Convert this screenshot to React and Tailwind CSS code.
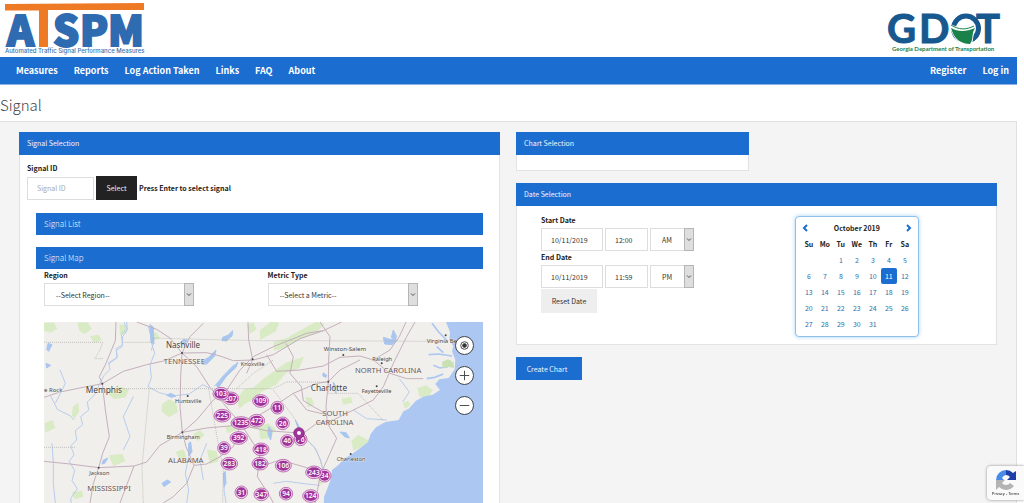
import { useState } from "react";

const NAV_LEFT = ["Measures", "Reports", "Log Action Taken", "Links", "FAQ", "About"];
const NAV_RIGHT = ["Register", "Log in"];
const DAYS = ["Su", "Mo", "Tu", "We", "Th", "Fr", "Sa"];
const WEEKS = [
  [null, null, 1, 2, 3, 4, 5],
  [6, 7, 8, 9, 10, 11, 12],
  [13, 14, 15, 16, 17, 18, 19],
  [20, 21, 22, 23, 24, 25, 26],
  [27, 28, 29, 30, 31, null, null],
];

// map units: 3 per pixel
const PINS = [
  [572, 265, "207", 24],
  [543, 251, "103", 24],
  [662, 273, "109", 24],
  [712, 293, "11", 19],
  [547, 317, "225", 25],
  [650, 332, "472", 24],
  [603, 339, "1235", 30],
  [728, 340, "26", 20],
  [596, 384, "392", 26],
  [782, 388, "76", 19],
  [742, 393, "46", 20],
  [552, 414, "39", 19],
  [663, 418, "418", 24],
  [568, 461, "283", 25],
  [660, 461, "182", 24],
  [730, 467, "106", 24],
  [854, 497, "34", 19],
  [822, 487, "243", 25],
  [604, 547, "31", 19],
  [664, 553, "347", 22],
  [738, 551, "94", 20],
  [812, 558, "124", 24],
];

const CITIES = [
  [378, 114, "Nashville", 24],
  [137, 250, "Memphis", 25],
  [812, 243, "Charlotte", 25],
  [602, 168, "Knoxville", 17],
  [851, 123, "Winston-Salem", 18],
  [997, 152, "Raleigh", 17],
  [965, 249, "Fayetteville", 17],
  [405, 279, "Huntsville", 17],
  [380, 388, "Birmingham", 17],
  [148, 494, "Jackson", 17],
  [890, 452, "Charleston", 17],
  [1160, 98, "Virginia Be", 18],
  [12, 246, "e Rock", 18],
];

const STATES = [
  [371, 163, "TENNESSEE"],
  [945, 188, "NORTH CAROLINA"],
  [847, 318, "SOUTH"],
  [827, 344, "CAROLINA"],
  [384, 460, "ALABAMA"],
  [142, 544, "MISSISSIPPI"],
];

const DOTS = [[187, 221], [426, 129], [638, 148], [910, 135], [1025, 160], [1010, 229], [865, 215], [443, 258], [427, 367], [176, 473], [932, 432], [1217, 76]];

const GREENS = [
  "M12 38l30 0 10 18-20 12-20-6z",
  "M112 38l30-2 14 20-22 16-16-10z",
  "M150 78l26-4 10 16-24 10z",
  "M238 42l18 4 4 22-20 8z",
  "M98 290l16-12 4 24-14 24-8-10z",
  "M205 238l36-8 26 8-10 24-34 6-16-12z",
  "M366 282l22-14 20 10 6 28-28 16-22-18z",
  "M330 76l20-10 10 18-22 10z",
  "M14 340l24-10 8 24-30 14z",
  "M206 436l42-4 8 22-36 14z",
  "M96 546l30-4 4 18-26 8z",
  "M406 426l24-8 10 22-22 8z",
  "M460 372l20-12 14 16-22 18z",
  "M500 418l30 6 6 30-26 8z",
  "M590 268l22-30 30-6 28-26 42-30 30-20 50-16-14 34-40 16-30 34-44 22-20 22-30 14-16 14z",
  "M660 60l34-26 24 4-10 26-48 26z",
  "M700 96l40-12 36-20 50-28 28 6-24 24-50 22-44 26-34 8z",
  "M620 46l20-10 10 22-20 14z",
  "M625 324l18-10 18 12-8 26-22 4z",
  "M555 350l26-6 10 16-28 10z",
  "M655 350l30-10 22 18-16 26-30 4z",
  "M905 266l28-6 4 18-28 6z",
  "M934 392l20-18 34 18-24 20-24 10z",
  "M1088 280l16-8 8 12-16 12z",
  "M1132 234l26-8 20 14-12 22-28-2z",
  "M796 260l20 4 6 20-18 8z",
  "M840 500l10 10-6 14-12-8z",
  "M548 90l12-16 10 10-10 14z",
];

const LAKES = [
  "M330 44l10 8 2 50-8-4-4-34z",
  "M492 150l14-8 22-22-4 18-24 24-12 2z",
  "M548 82l16-6 14-14-2 16-18 14-12 0z",
  "M528 226l20-24 24-26 22-20-6 16-30 28-22 32z",
  "M420 100l10-12 12 2-10 14z",
  "M380 256l12-6 16 8-14 4z",
  "M446 400l6-4 4 30-10 12z",
  "M550 490l6-6 2 36-6 10z",
  "M366 520l16-10 10 6-20 14z",
  "M728 338l6 10-4 8-8-8z",
  "M766 330l12 22 8 14-10-6z",
  "M686 350l10 12-4 28-8-18z",
  "M900 366l18 2 10 16-14-4z",
  "M1030 82l20 6 22 2-16 14-22-2z",
  "M1060 60l10 20-6 10-10-8z",
  "M880 216l8 14 0 20-8-16z",
  "M850 188l10 8-2 6-10-4z",
  "M190 450l14-6-10 16-8 2z",
  "M24 100l12 4-10 20-6-6z",
  "M18 160l14 6-12 8z",
];

const ROADS = [
  "M228 36L226 92 198 160 178 200 187 221 196 300 208 380 188 430 176 473 160 520 150 579",
  "M12 262L60 246 130 232 187 221 250 184 320 164 371 153 426 129 500 128 540 138 580 152 640 150 700 134 780 86 850 62 905 36",
  "M290 36L350 58 390 84 426 129 422 200 420 290 427 367 438 410 462 466 440 520 400 560 370 579",
  "M426 129L450 80 490 40",
  "M426 129L470 170 510 232 550 280 575 310 602 340 640 400 660 430 652 500 690 560 700 579",
  "M12 454L90 462 176 473 282 468 320 456 360 406 427 367 470 330 520 270 560 240 600 180 640 140 700 110 800 70 850 62",
  "M427 367L500 354 600 345 680 362 790 370 830 340 880 330 940 300 1000 270 1030 230 1060 160 1100 80 1125 36",
  "M462 466L500 462 540 440 580 410 602 340",
  "M282 468L262 520 240 579",
  "M624 36L626 90 638 148 620 190",
  "M680 134L710 184 780 180 850 168 900 142 960 138 1000 150 1050 120 1078 80 1098 36",
  "M602 340L650 320 700 290 760 250 830 220 865 215 900 180 960 150",
  "M840 36L870 80 866 150 865 215 858 290 862 340 890 385 870 430 852 470 840 500 825 579",
  "M738 100L760 140 750 190 784 230 790 272 820 290 870 318",
  "M660 470L720 450 790 470 840 486",
  "M1000 150L1050 190 1100 206 1150 206",
  "M760 250L800 300 850 312",
];

const RIVERS = [
  "M252 36l8 20-16 18 4 30-20 12 4 26-26 16 4 20-18 18-14 28-14 30-22 22 4 24-24 20 6 24-22 18 4 28-18 18 10 26-14 20 16 28-8 30 16 24-20 30 4 28-14 24",
  "M260 36l2 24-14 20-2 30-16 10 0 24-24 18",
  "M340 60l-8 30 12 40-14 34 4 40-10 26 34 18 40 10 50-6 40-28 20 10",
  "M325 50l15 50-6 22",
  "M32 258l20 40 40 20 10 12",
  "M36 400l4 60 0 60 6 59",
  "M446 440l-10 50 10 50-6 39",
  "M522 230l30-36 30-30",
  "M556 500l-4 40 6 39",
  "M500 400l-20 50 10 60",
  "M700 520l40-6 60 8 40 4",
  "M940 300l40 26 60 4",
  "M1078 206l30 40-20 30",
  "M792 380l30 30 20 40 8 40",
  "M60 180l16 40-30 60",
  "M280 260l-30 60 20 60-20 40",
];

const BORDERS = [
  "M12 97H188L180 120 164 146H190",
  "M250 97H334L340 84 480 88 660 92 H800L1170 94H1220",
  "M186 236H590L640 190 700 150",
  "M328 236L318 340 306 470 310 579",
  "M506 236L522 330 540 430 550 470 548 579",
  "M12 412H108",
  "M590 236H700L740 216H865V250H954L1030 332",
  "M700 240L760 320 800 390 830 420 850 480",
];

const COAST =
  "M1218 36L1230 66 1228 90 1240 108 1236 124 1246 150 1244 178 1226 204 1198 208 1186 222 1200 240 1178 254 1150 260 1128 272 1106 296 1090 304 1076 330 1036 336 1008 352 992 372 984 396 958 416 936 432 912 446 896 464 876 480 872 508 862 536 852 560 850 640H1500V36Z";

function AtspmLogo() {
  return (
    <svg className="h-[57px] w-[146px] overflow-visible" viewBox="0 0 146 57" role="img" aria-label="ATSPM">
      <g
        fill="#2f6bb0"
        stroke="#2f6bb0"
        strokeWidth="2"
        fontFamily="'Noto Sans CJK SC', Lato, sans-serif"
        fontWeight="900"
        fontSize="41"
      >
        <text x="7" y="46">A</text>
        <text x="53" y="46">S</text>
        <text x="80" y="46">P</text>
        <text x="108" y="46">M</text>
      </g>
      <path d="M5 4L144 3V10H48V47H39V10.500H5Z" fill="#ee7a25" />
      <text x="5" y="53" fill="#3c70ad" fontFamily="Inter, sans-serif" fontWeight="500" fontSize="6">
        Automated Traffic Signal Performance Measures
      </text>
    </svg>
  );
}

function GdotLogo() {
  return (
    <svg className="h-[44px] w-[114px] overflow-visible" viewBox="0 0 114 44" role="img" aria-label="GDOT">
      <g fill="#17588f" stroke="#17588f" fontFamily="Lato, sans-serif" fontWeight="700" fontSize="40">
        <text x="0" y="33">G</text>
        <text x="32" y="33">D</text>
        <text x="89" y="33">T</text>
      </g>
      <circle cx="79" cy="18.500" r="12.500" fill="none" stroke="#17588f" strokeWidth="5" />
      <path d="M62 13C70 18 79 19 88 17L85 35C74 36 66 31 62 13Z" fill="#fff" />
      <path d="M64 18C71 22 79 22 88 18C84 24 87 29 83 34C74 34 67 29 64 18Z" fill="#19814a" />
      <path d="M64 15C72 20 79 20 87 16" fill="none" stroke="#19814a" strokeWidth="1" />
      <text x="5" y="41" fill="#19814a" fontFamily="Lato, sans-serif" fontWeight="700" fontSize="6">
        Georgia Department of Transportation
      </text>
    </svg>
  );
}

function SignalMap() {
  return (
    <div className="relative">
      <svg
        className="block h-[181px] w-full"
        viewBox="12 36 1317 543"
        preserveAspectRatio="xMinYMin slice"
        fontFamily="'Noto Sans', sans-serif"
      >
        <rect x="12" y="36" width="1500" height="600" fill="#f1efec" />
        {GREENS.map((d) => <path key={d} d={d} fill="#d9ebc5" />)}
        {RIVERS.map((d) => <path key={d} d={d} fill="none" stroke="#b7cdec" strokeWidth="3" />)}
        {LAKES.map((d) => <path key={d} d={d} fill="#a9c6f0" stroke="#a9c6f0" strokeWidth="3" />)}
        {BORDERS.map((d) => (
          <path key={d} d={d} fill="none" stroke="#a9a7a5" strokeWidth="2" strokeDasharray="3 3" />
        ))}
        {ROADS.map((d) => (
          <path key={d} d={d} fill="none" stroke="#c4afbd" strokeWidth="3" strokeLinejoin="round" />
        ))}
        <path d={COAST} fill="#abc7f2" />
        <path
          d="M1176 40l20 26 24 24M1166 134l30-2 40 6M1160 206l24-4 26-10M1180 166l20 8 24-4M1190 110l20 18"
          fill="none"
          stroke="#abc7f2"
          strokeWidth="5"
        />
        <path d="M1206 156l18-8 12 6-4 16-24 4zM1224 170l16-16 2 20z" fill="#c9e0b4" />
        {DOTS.map(([x, y]) => <circle key={`${x}-${y}`} cx={x} cy={y} r="3" fill="#444" />)}
        <g fill="#444" stroke="#f6f4f2" strokeWidth="2" paintOrder="stroke">
          {CITIES.map(([x, y, name, size]) => (
            <text key={name} x={x} y={y} fontSize={size}>{name}</text>
          ))}
        </g>
        <g fill="#6a5552" fontSize="23" stroke="#f6f4f2" strokeWidth="2" paintOrder="stroke">
          {STATES.map(([x, y, name]) => <text key={name} x={x} y={y}>{name}</text>)}
        </g>
        {PINS.map(([x, y, label, rx]) => (
          <g key={`${x}-${y}`}>
            <ellipse cx={x} cy={y} rx={rx} ry="19" fill="#f0d6ec" stroke="#a33d98" strokeWidth="2" />
            <ellipse cx={x} cy={y} rx={rx - 4} ry="15" fill="#a0339a" />
            <text x={x} y={y + 7} textAnchor="middle" fontSize="20" fontWeight="600" fill="#fff">{label}</text>
          </g>
        ))}
        <path
          d="M777 390C772 384 761 379 761 369A16 16 0 0 1 793 369C793 379 782 384 777 390Z"
          fill="#a0339a"
          stroke="#7d1f77"
          strokeWidth="2"
        />
        <circle cx="777" cy="369" r="6" fill="#fff" />
      </svg>

      {/* Map controls */}
      <div className="absolute top-[14px] right-[9px] flex flex-col gap-[11px]">
        <MapButton label="Locate me">
          <circle cx="9" cy="9" r="4" />
          <circle cx="9" cy="9" r="2" fill="#333" />
        </MapButton>
        <MapButton label="Zoom in"><path d="M4 9h10M9 4v10" /></MapButton>
        <MapButton label="Zoom out"><path d="M4 9h10" /></MapButton>
      </div>
    </div>
  );
}

function MapButton({ label, children }) {
  return (
    <button aria-label={label} className="h-[19px] w-[19px] rounded-full border border-[#444] bg-white">
      <svg className="block h-full w-full" viewBox="0 0 18 18" fill="none" stroke="#444" strokeWidth="1">
        {children}
      </svg>
    </button>
  );
}

function Select({ id, label, options, className }) {
  return (
    <div className={`relative h-[23px] ${className}`}>
      <select
        id={id}
        aria-label={label}
        className="h-full w-full appearance-none border border-[#ddd] bg-white px-[11px] text-[7px] text-[#333]"
      >
        {options.map((o) => <option key={o}>{o}</option>)}
      </select>
      <span className="pointer-events-none absolute inset-y-0 right-0 flex w-[10px] items-center justify-center border border-[#b5b5b5] bg-[#dedede]">
        <svg className="h-1 w-1.5" viewBox="0 0 6 4" fill="none" stroke="#555">
          <path d="M1 .5l2 2 2-2" />
        </svg>
      </span>
    </div>
  );
}

function Panel({ title, className = "", children }) {
  return (
    <section className={`border border-[#e3e3e3] bg-white ${className}`}>
      <h2 className="-mx-px -mt-px flex h-[23px] items-center bg-[#1c6dd0] px-2 pb-px text-[#f0f6fd]">{title}</h2>
      {children}
    </section>
  );
}

const INPUT = "h-[23px] border border-[#ddd] bg-white px-[9px] text-[#333] placeholder:text-[#aaa]";
const LABEL = "block h-[14px] leading-[12px] font-bold";

function DateRow({ id, label, time, period }) {
  const [date, setDate] = useState("10/11/2019");
  return (
    <div>
      <label htmlFor={id} className={LABEL}>{label}</label>
      <div className="flex gap-0.5">
        <input id={id} value={date} onChange={(e) => setDate(e.target.value)} className={`w-[62px] ${INPUT}`} />
        <input aria-label={`${label} time`} defaultValue={time} className={`w-[43px] ${INPUT}`} />
        <Select
          label={`${label} AM/PM`}
          options={period === "AM" ? ["AM", "PM"] : ["PM", "AM"]}
          className="w-[44px]"
        />
      </div>
    </div>
  );
}

function Calendar() {
  const [selected, setSelected] = useState(11);
  return (
    <div className="mt-0.5 h-[121px] w-[124px] rounded-sm border border-[#8ec0ea] bg-white px-[5px] pt-[3px] shadow-[0_0_4px_#a9d3f5]">
      <div className="flex h-4 items-center justify-between">
        <button aria-label="Previous month" className="text-[#1c6dd0]">
          <svg className="h-2 w-2" viewBox="0 0 8 8" fill="none" stroke="currentColor" strokeWidth="2">
            <path d="M6 1L3 4l3 3" />
          </svg>
        </button>
        <span className="font-bold">October 2019</span>
        <button aria-label="Next month" className="text-[#1c6dd0]">
          <svg className="h-2 w-2" viewBox="0 0 8 8" fill="none" stroke="currentColor" strokeWidth="2">
            <path d="M2 1l3 3-3 3" />
          </svg>
        </button>
      </div>
      <table className="w-full table-fixed border-collapse text-center">
        <thead>
          <tr className="h-4">
            {DAYS.map((d) => <th key={d} className="p-0 font-bold">{d}</th>)}
          </tr>
        </thead>
        <tbody>
          {WEEKS.map((week, i) => (
            <tr key={i} className="h-4">
              {week.map((day, j) => (
                <td key={j} className="p-0">
                  {day && (
                    <button
                      onClick={() => setSelected(day)}
                      className={`block h-4 w-full rounded-xs leading-4 ${
                        day === selected ? "bg-[#1c6dd0] text-white" : "text-[#2f6fab]"
                      }`}
                    >
                      {day}
                    </button>
                  )}
                </td>
              ))}
            </tr>
          ))}
        </tbody>
      </table>
    </div>
  );
}

export default function App() {
  return (
    <div className="flex h-screen flex-col overflow-hidden bg-white pr-[7px] font-['Noto_Sans_CJK_SC','Noto_Sans',sans-serif] text-[7px] leading-[10px] text-[#222]">
      {/* Logos */}
      <header className="flex h-[57px] shrink-0 items-start justify-between pr-4">
        <AtspmLogo />
        <div className="pt-[10px]"><GdotLogo /></div>
      </header>

      {/* Navigation */}
      <nav className="flex h-[28px] shrink-0 items-center justify-between border-b border-[#8ab2e5] bg-[#1c6dd0] pr-2 pl-4 text-[9px] font-bold text-white">
        <div className="flex gap-4">
          {NAV_LEFT.map((item) => <a key={item} href="#">{item}</a>)}
        </div>
        <div className="flex gap-4">
          {NAV_RIGHT.map((item) => <a key={item} href="#">{item}</a>)}
        </div>
      </nav>

      <h1 className="flex h-9 shrink-0 items-center pt-1 text-[15px] font-light text-[#444]">Signal</h1>

      <main className="grid flex-1 grid-cols-2 items-start gap-4 border-t border-r border-[#e0e0e0] bg-[#f4f4f4] px-[19px] pt-[10px]">
        {/* Signal selection */}
        <Panel title="Signal Selection">
          <div className="px-[7px] pt-[7px]">
            <label htmlFor="signal-id" className={LABEL}>Signal ID</label>
            <div className="flex items-center gap-0.5">
              <input id="signal-id" placeholder="Signal ID" className={`w-[67px] ${INPUT}`} />
              <button className="h-6 w-[41px] bg-[#222] text-[#eee]">Select</button>
              <span className="font-bold">Press Enter to select signal</span>
            </div>
          </div>

          <div className="px-4 pt-[13px]">
            <h3 className="flex h-[22px] items-center bg-[#1c6dd0] px-2 pb-px text-[8px] font-light text-[#f0f6fd]">Signal List</h3>
            <h3 className="mt-3 flex h-[22px] items-center bg-[#1c6dd0] px-2 pb-px text-[8px] font-light text-[#f0f6fd]">Signal Map</h3>
            <div className="pl-2">
              <div className="grid grid-cols-2">
                <div>
                  <label htmlFor="region" className={LABEL}>Region</label>
                  <Select id="region" options={["--Select Region--"]} className="w-[150px]" />
                </div>
                <div className="pl-1">
                  <label htmlFor="metric" className={LABEL}>Metric Type</label>
                  <Select id="metric" options={["--Select a Metric--"]} className="w-[150px]" />
                </div>
              </div>
              <div className="pt-4"><SignalMap /></div>
            </div>
          </div>
        </Panel>

        {/* Chart and date selection */}
        <div className="flex flex-col items-start gap-3">
          <Panel title="Chart Selection" className="w-[233px]">
            <div className="h-[15px]" />
          </Panel>

          <Panel title="Date Selection" className="w-full">
            <div className="grid grid-cols-[53fr_42fr] pt-2 pb-[7px] pl-6">
              <div>
                <DateRow id="start-date" label="Start Date" time="12:00" period="AM" />
                <DateRow id="end-date" label="End Date" time="11:59" period="PM" />
                <button className="mt-px h-6 w-14 bg-[#eee] text-[#333]">Reset Date</button>
              </div>
              <Calendar />
            </div>
          </Panel>

          <button className="h-[23px] w-[66px] bg-[#1c6dd0] pr-1 text-[#f0f6fd]">Create Chart</button>
        </div>
      </main>

      {/* reCAPTCHA badge */}
      <aside className="fixed right-0 bottom-[3px] flex h-[34px] w-[37px] flex-col items-center rounded-l-sm bg-[#fafafa] pt-1 shadow-[0_0_3px_#888]">
        <svg className="h-5 w-5" viewBox="0 0 20 20">
          <path d="M0 10A10 10 0 0 1 10 0V5A5 5 0 0 0 6 8L8 10Z" fill="#4a8be8" />
          <path d="M10 0A10 10 0 0 1 17 3L20 1V10H11L14 7A5 5 0 0 0 10 5Z" fill="#1d3faa" />
          <path d="M0 10H9L6 13A5 5 0 0 0 14 13L18 16A10 10 0 0 1 3 17L0 20Z" fill="#b4b4b4" />
        </svg>
        <span className="font-['Liberation_Sans',sans-serif] text-[4px] leading-[8px] whitespace-nowrap">
          <a href="#">Privacy</a> - <a href="#">Terms</a>
        </span>
      </aside>
    </div>
  );
}
